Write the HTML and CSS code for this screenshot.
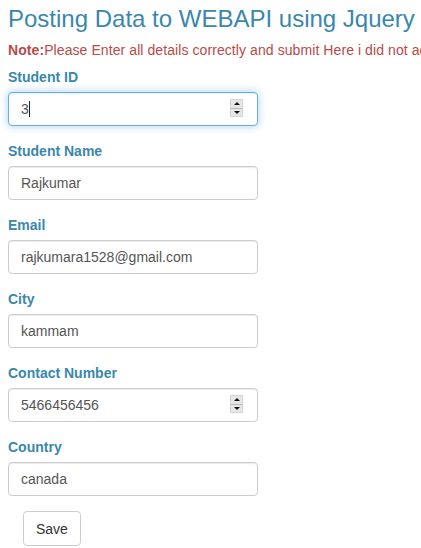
FILE: index.html
```html
<!DOCTYPE html>
<html lang="en">
<head>
<meta charset="utf-8">
<title>Posting Data to WEBAPI using Jquery</title>
<link rel="stylesheet" href="styles.css">
</head>
<body>
<div class="page">
  <h2 class="title">Posting Data to WEBAPI using Jquery</h2>
  <p class="note"><strong>Note:</strong>Please Enter all details correctly and submit Here i did not add any validations</p>
  <form class="form">
    <div class="group">
      <label class="label" for="sid">Student ID</label>
      <div class="field">
        <input class="input input-focus" id="sid" type="number" value="3">
        <span class="caret" aria-hidden="true"></span>
        <span class="spin" aria-hidden="true"><span class="spin-up"></span><span class="spin-down"></span></span>
      </div>
    </div>
    <div class="group">
      <label class="label" for="sname">Student Name</label>
      <div class="field"><input class="input" id="sname" type="text" value="Rajkumar"></div>
    </div>
    <div class="group">
      <label class="label" for="email">Email</label>
      <div class="field"><input class="input" id="email" type="text" value="rajkumara1528@gmail.com"></div>
    </div>
    <div class="group">
      <label class="label" for="city">City</label>
      <div class="field"><input class="input" id="city" type="text" value="kammam"></div>
    </div>
    <div class="group">
      <label class="label" for="phone">Contact Number</label>
      <div class="field">
        <input class="input" id="phone" type="number" value="5466456456">
        <span class="spin" aria-hidden="true"><span class="spin-up"></span><span class="spin-down"></span></span>
      </div>
    </div>
    <div class="group">
      <label class="label" for="country">Country</label>
      <div class="field"><input class="input" id="country" type="text" value="canada"></div>
    </div>
    <button class="btn" type="button">Save</button>
  </form>
</div>
</body>
</html>
```

FILE: styles.css
```css
html, body {
  margin: 0;
  padding: 0;
  background: #fff;
}
body {
  font-family: "Liberation Sans", Arial, Helvetica, sans-serif;
  font-size: 14px;
  line-height: 20px;
  color: #333;
  overflow: hidden;
}
.page {
  padding: 6px 0 0 8px;
  overflow: hidden;
}
.title {
  margin: 0 0 8px 0;
  font-size: 24px;
  line-height: 26.4px;
  font-weight: normal;
  color: #3a87ad;
  white-space: nowrap;
}
.note {
  margin: 0 0 7px 0;
  color: #b94a48;
  white-space: nowrap;
  letter-spacing: 0.08px;
}
.note strong {
  font-weight: bold;
}
.form {
  margin: 0;
}
.group {
  margin-bottom: 15px;
}
.label {
  display: inline-block;
  margin-bottom: 5px;
  font-weight: bold;
  color: #3a87ad;
}
.field {
  position: relative;
  width: 250px;
}
.input {
  display: block;
  box-sizing: border-box;
  width: 250px;
  height: 34px;
  margin: 0;
  padding: 6px 12px;
  font-family: "Liberation Sans", Arial, Helvetica, sans-serif;
  font-size: 14px;
  line-height: 20px;
  color: #555;
  background: #fff;
  border: 1px solid #ccc;
  border-radius: 4px;
  box-shadow: inset 0 1px 1px rgba(0,0,0,0.075);
  outline: none;
  -moz-appearance: textfield;
}
.input::-webkit-inner-spin-button,
.input::-webkit-outer-spin-button {
  -webkit-appearance: none;
  margin: 0;
}
.input-focus {
  border-color: #66afe9;
  box-shadow: inset 0 1px 1px rgba(0,0,0,0.075), 0 0 8px rgba(102,175,233,0.6);
}
.caret {
  position: absolute;
  left: 21px;
  top: 9px;
  width: 1px;
  height: 16px;
  background: #222;
}
.spin {
  position: absolute;
  left: 222px;
  top: 7px;
  width: 13px;
  height: 18px;
  display: flex;
  flex-direction: column;
  box-sizing: border-box;
  border: 1px solid #d4d4d4;
  background: #e6e6e6;
}
.spin-up, .spin-down {
  flex: 1;
  position: relative;
}
.spin-up {
  border-bottom: 1px solid #b8b8b8;
}
.spin-up::after, .spin-down::after {
  content: "";
  position: absolute;
  left: 3px;
  width: 0;
  height: 0;
  border-left: 3px solid transparent;
  border-right: 3px solid transparent;
}
.spin-up::after {
  top: 2px;
  border-bottom: 3px solid #111;
}
.spin-down::after {
  top: 2px;
  border-top: 3px solid #111;
}
.btn {
  display: inline-block;
  margin: 0 0 0 15px;
  padding: 6px 12px;
  height: 35px;
  font-family: "Liberation Sans", Arial, Helvetica, sans-serif;
  font-size: 14px;
  line-height: 20px;
  color: #333;
  background: #fff;
  border: 1px solid #ccc;
  border-radius: 4px;
  cursor: pointer;
}
```
